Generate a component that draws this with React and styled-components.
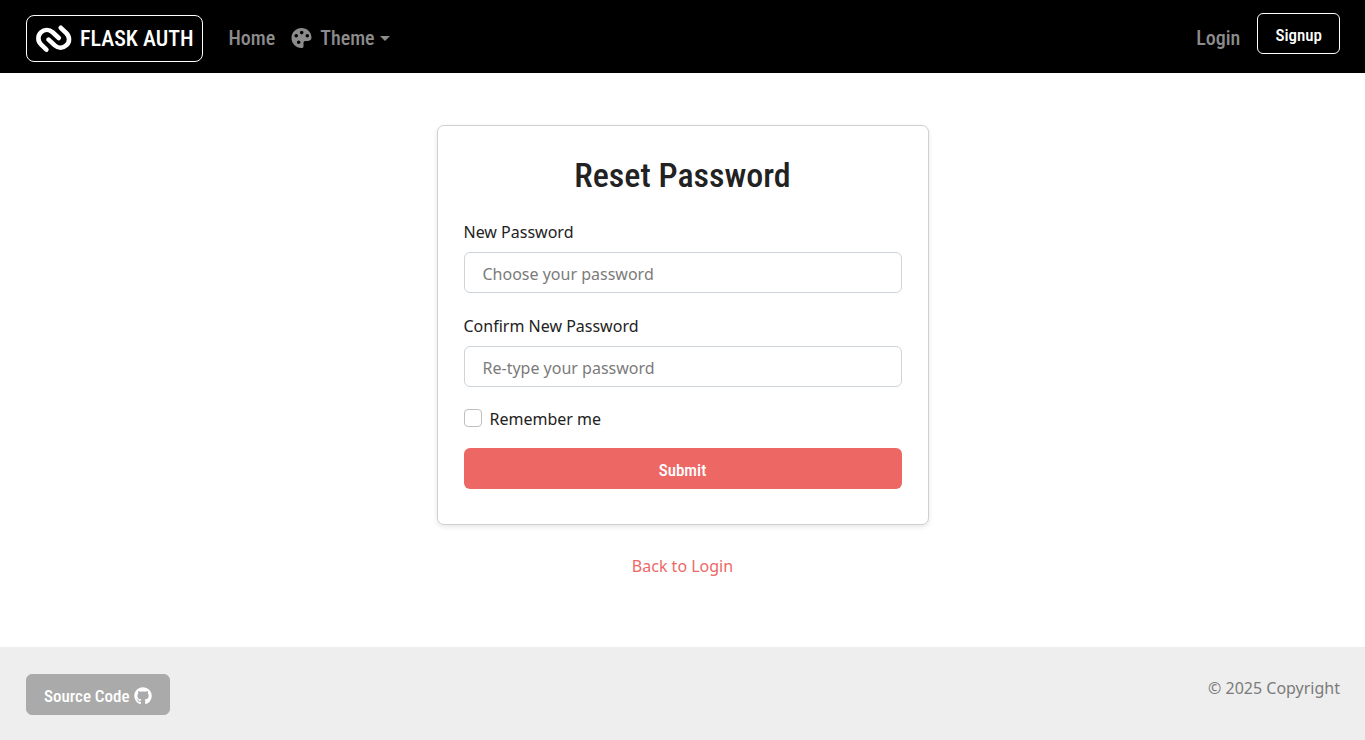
import React from "react";
import styled, { createGlobalStyle } from "styled-components";
import { FaGithub } from "react-icons/fa";

const heading = `"Roboto Condensed", "Liberation Sans Narrow", sans-serif`;
const body = `"Noto Sans", "Open Sans", sans-serif`;

const GlobalStyle = createGlobalStyle`
  *, *::before, *::after { box-sizing: border-box; }
  body {
    margin: 0;
    background: #fff;
    color: #222;
    font-family: ${body};
    font-size: 16px;
    line-height: 26px;
  }
`;

const Page = styled.div`
  display: flex;
  flex-direction: column;
  min-height: 100vh;
`;

const Navbar = styled.nav`
  display: flex;
  align-items: center;
  gap: 18px;
  min-height: 73px;
  padding: 0 25px 0 26px;
  background: #000;
`;

const Brand = styled.a`
  display: flex;
  align-items: center;
  gap: 8px;
  height: 47px;
  margin: 4px 7px 0 0;
  padding: 0 9px;
  border: 1px solid #fff;
  border-radius: 8px;
  color: #fff;
  font: 500 22px/30px ${heading};
  text-decoration: none;
`;

const NavLinks = styled.div`
  display: flex;
  flex: 1;
  align-items: center;
  gap: 16px;
  padding-top: 3px;
`;

const NavLink = styled.a`
  color: #8c8c8c;
  font: 500 20px/32px ${heading};
  text-decoration: none;
`;

const ThemeButton = styled.button`
  display: flex;
  align-items: center;
  gap: 8px;
  padding: 0;
  border: 0;
  background: none;
  color: #8c8c8c;
  font: 500 20px/32px ${heading};
`;

const Caret = styled.span`
  margin-left: -3px;
  border-top: 5px solid;
  border-right: 5px solid transparent;
  border-left: 5px solid transparent;
`;

const NavEnd = styled.div`
  display: flex;
  align-items: flex-end;
  gap: 17px;
  padding-bottom: 6px;
`;

const ButtonLink = styled.a`
  display: inline-flex;
  align-items: center;
  gap: 4px;
  height: 41px;
  padding: 2px 17px 0;
  border: 1px solid ${(p) => p.$border};
  border-radius: 6px;
  background: ${(p) => p.$fill};
  color: #fff;
  font: 500 17px/26px ${heading};
  text-decoration: none;
`;

const Main = styled.main`
  display: flex;
  flex: 1;
  flex-direction: column;
  align-items: center;
  padding: 52px 16px;
`;

const Card = styled.form`
  width: 100%;
  max-width: 492px;
  padding: 27px 26px 35px;
  border: 1px solid #ced0d2;
  border-radius: 7px;
  background: #fff;
  box-shadow: 0 2px 5px rgba(0, 0, 0, 0.1);
`;

const Title = styled.h1`
  margin: 0 0 22px;
  font: 500 34px/44px ${heading};
  text-align: center;
`;

const Field = styled.div`
  display: flex;
  flex-direction: column;
  gap: 7px;
  margin-bottom: 20px;
`;

const Input = styled.input`
  width: 100%;
  height: 41px;
  padding: 2px 18px 0;
  border: 1px solid #ced4da;
  border-radius: 6px;
  background: #fff;
  color: #222;
  font: 16px/26px ${body};

  &::placeholder {
    color: #7b7b7b;
    opacity: 1;
  }
`;

const Check = styled.label`
  display: flex;
  align-items: flex-start;
  gap: 8px;
  margin-bottom: 17px;
  line-height: 24px;
`;

const Checkbox = styled.input`
  width: 18px;
  height: 18px;
  margin: 2px 0 0;
  appearance: none;
  border: 1px solid #bfbfbf;
  border-radius: 4px;
  background: #fff;

  &:checked {
    border-color: #ed6865;
    background: #ed6865;
  }
`;

const Submit = styled.button`
  width: 100%;
  height: 41px;
  padding: 2px 0 0;
  border: 0;
  border-radius: 6px;
  background: #ed6865;
  color: #fff;
  font: 500 17px/26px ${heading};
`;

const BackLink = styled.a`
  margin-top: 28px;
  color: #ed6865;
  text-decoration: none;
`;

const Footer = styled.footer`
  display: flex;
  align-items: flex-start;
  justify-content: space-between;
  min-height: 93px;
  padding: 27px 25px 25px 26px;
  background: #eee;
  color: #7b7b7b;
`;

const Copyright = styled.span`
  line-height: 28px;
`;

function Logo() {
  return (
    <svg width="36" height="28" viewBox="0 0 36 28" fill="none" stroke="#fff" strokeWidth="4.6" strokeLinecap="round" strokeLinejoin="round" aria-hidden="true">
      <path d="M10.4 24.6 5.2 19.6C1.5 16 1.5 10.6 4.9 7.4C8.3 4.2 13.2 4.2 16.6 7.2L22.8 13" />
      <path d="M24.8 2.8 30.2 8C33.9 11.6 33.9 17 30.5 20.2C27.1 23.4 22.2 23.4 18.8 20.4L12.6 14.6" />
    </svg>
  );
}

function Palette() {
  return (
    <svg width="21" height="20" viewBox="0 0 20 20" fill="currentColor" aria-hidden="true">
      <path
        fillRule="evenodd"
        d="M10 0C15.6 0 20 4.2 20 9.6C20 12 18.6 12.9 16.6 12.9H14C12.6 12.9 12 13.6 12 15V18C12 19.4 11.4 20 10 20C4.4 20 0 15.6 0 10S4.4 0 10 0ZM4.7 6a1.8 1.8 0 1 0 0 3.6a1.8 1.8 0 1 0 0-3.6ZM10.2 2.8a1.8 1.8 0 1 0 0 3.6a1.8 1.8 0 1 0 0-3.6ZM15.8 6a1.8 1.8 0 1 0 0 3.6a1.8 1.8 0 1 0 0-3.6ZM7.2 12.4a1.8 1.8 0 1 0 0 3.6a1.8 1.8 0 1 0 0-3.6Z"
      />
    </svg>
  );
}

export default function App() {
  return (
    <Page>
      <GlobalStyle />
      <Navbar>
        <Brand href="#">
          <Logo />
          FLASK AUTH
        </Brand>
        <NavLinks>
          <NavLink href="#">Home</NavLink>
          <ThemeButton type="button">
            <Palette />
            Theme
            <Caret />
          </ThemeButton>
        </NavLinks>
        <NavEnd>
          <NavLink href="#">Login</NavLink>
          <ButtonLink href="#" $border="#fff" $fill="#000">Signup</ButtonLink>
        </NavEnd>
      </Navbar>
      <Main>
        <Card>
          <Title>Reset Password</Title>
          <Field>
            <label htmlFor="password">New Password</label>
            <Input id="password" type="password" placeholder="Choose your password" />
          </Field>
          <Field>
            <label htmlFor="confirm">Confirm New Password</label>
            <Input id="confirm" type="password" placeholder="Re-type your password" />
          </Field>
          <Check>
            <Checkbox type="checkbox" />
            Remember me
          </Check>
          <Submit type="submit">Submit</Submit>
        </Card>
        <BackLink href="#">Back to Login</BackLink>
      </Main>
      <Footer>
        <ButtonLink href="#" $border="#aaa" $fill="#aaa">
          Source Code
          <FaGithub size={18} aria-hidden="true" />
        </ButtonLink>
        <Copyright>© 2025 Copyright</Copyright>
      </Footer>
    </Page>
  );
}
